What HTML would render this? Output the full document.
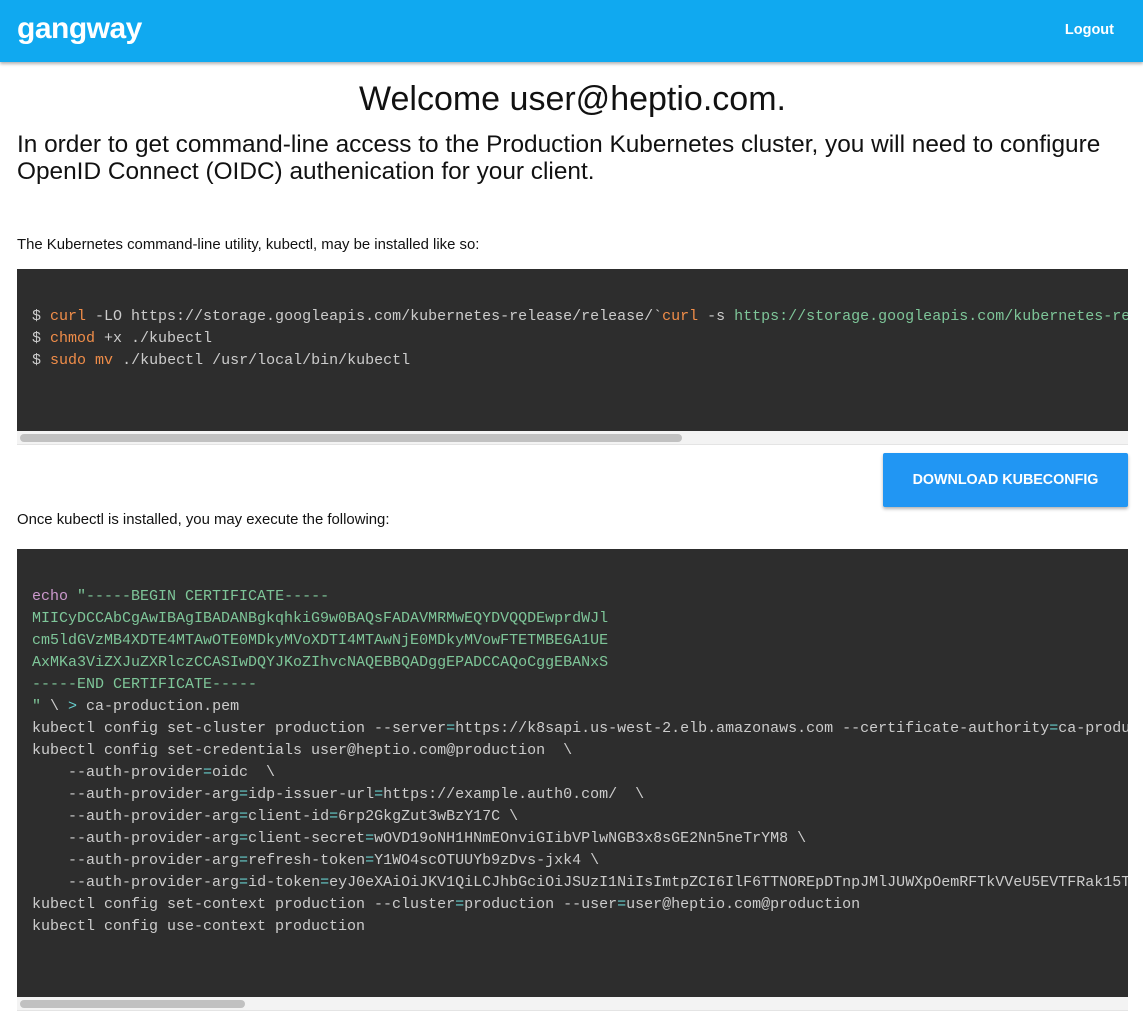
<!DOCTYPE html>
<html><head><meta charset="utf-8"><style>
body{margin:0;width:1143px;height:1021px;overflow:hidden;background:#fff;font-family:"Liberation Sans",sans-serif;position:relative;color:#222}
.hdr{position:absolute;left:0;top:0;width:1143px;height:62px;background:#10a9f0;box-shadow:0 2px 3px rgba(0,0,0,.3)}
.logo{position:absolute;left:17px;top:12px;color:#fff;font-size:30px;font-weight:bold;letter-spacing:-0.5px}
.logout{position:absolute;right:29px;top:22px;color:#fff;font-size:14.5px;font-weight:bold}
.welcome{position:absolute;left:0;width:1143px;top:80px;text-align:center;font-size:34px;color:#111;padding-left:1px}
.intro{position:absolute;left:17px;top:131px;font-size:24.4px;line-height:27px;color:#111;width:1120px}
.p{position:absolute;left:17px;font-size:14.9px;color:#111}
.code{position:absolute;left:17px;width:1111px;background:#2d2d2d;overflow:hidden}
pre{margin:0;position:absolute;left:15px;font-family:"Liberation Mono",monospace;font-size:15px;line-height:22px;color:#ccc;white-space:pre}
.f{color:#f08d49}.s{color:#7ec699}.k{color:#cc99cd}.o{color:#67cdcc}
.track{position:absolute;left:17px;width:1111px;background:#f3f3f3;border-bottom:1px solid #e4e4e4}
.thumb{position:absolute;height:8px;border-radius:4px;background:#c1c1c1}
.btn{position:absolute;left:883px;top:453px;width:245px;height:54px;background:#2196f3;border-radius:2px;box-shadow:0 2px 3px rgba(0,0,0,.3);color:#fff;font-size:14.3px;font-weight:bold;text-align:center;line-height:54px}
</style></head><body>
<div class="hdr"><div class="logo">gangway</div><div class="logout">Logout</div></div>
<div class="welcome">Welcome user@heptio.com.</div>
<div class="intro">In order to get command-line access to the Production Kubernetes cluster, you will need to configure OpenID Connect (OIDC) authenication for your client.</div>
<div class="p" style="top:237px">The Kubernetes command-line utility, kubectl, may be installed like so:</div>
<div class="code" style="top:269px;height:162px">
<pre style="top:37px">$ <span class="f">curl</span> -LO https://storage.googleapis.com/kubernetes-release/release/`<span class="f">curl</span> -s <span class="s">https://storage.googleapis.com/kubernetes-release/release/stable.txt</span>`
$ <span class="f">chmod</span> +x ./kubectl
$ <span class="f">sudo</span> <span class="f">mv</span> ./kubectl /usr/local/bin/kubectl</pre></div>
<div class="track" style="top:431px;height:13px"><div class="thumb" style="left:3px;top:3px;width:662px"></div></div>
<div class="btn">DOWNLOAD KUBECONFIG</div>
<div class="p" style="top:512px">Once kubectl is installed, you may execute the following:</div>
<div class="code" style="top:549px;height:448px">
<pre style="top:37px"><span class="k">echo</span> <span class="s">"-----BEGIN CERTIFICATE-----
MIICyDCCAbCgAwIBAgIBADANBgkqhkiG9w0BAQsFADAVMRMwEQYDVQQDEwprdWJl
cm5ldGVzMB4XDTE4MTAwOTE0MDkyMVoXDTI4MTAwNjE0MDkyMVowFTETMBEGA1UE
AxMKa3ViZXJuZXRlczCCASIwDQYJKoZIhvcNAQEBBQADggEPADCCAQoCggEBANxS
-----END CERTIFICATE-----
"</span> \ <span class="o">&gt;</span> ca-production.pem
kubectl config set-cluster production --server<span class="o">=</span>https://k8sapi.us-west-2.elb.amazonaws.com --certificate-authority<span class="o">=</span>ca-production.pem
kubectl config set-credentials user@heptio.com@production  \
    --auth-provider<span class="o">=</span>oidc  \
    --auth-provider-arg<span class="o">=</span>idp-issuer-url<span class="o">=</span>https://example.auth0.com/  \
    --auth-provider-arg<span class="o">=</span>client-id<span class="o">=</span>6rp2GkgZut3wBzY17C \
    --auth-provider-arg<span class="o">=</span>client-secret<span class="o">=</span>wOVD19oNH1HNmEOnviGIibVPlwNGB3x8sGE2Nn5neTrYM8 \
    --auth-provider-arg<span class="o">=</span>refresh-token<span class="o">=</span>Y1WO4scOTUUYb9zDvs-jxk4 \
    --auth-provider-arg<span class="o">=</span>id-token<span class="o">=</span>eyJ0eXAiOiJKV1QiLCJhbGciOiJSUzI1NiIsImtpZCI6IlF6TTNOREpDTnpJMlJUWXpOemRFTkVVeU5EVTFRak15TkRR
kubectl config set-context production --cluster<span class="o">=</span>production --user<span class="o">=</span>user@heptio.com@production
kubectl config use-context production</pre></div>
<div class="track" style="top:997px;height:13px"><div class="thumb" style="left:3px;top:3px;width:225px"></div></div>
</body></html>
